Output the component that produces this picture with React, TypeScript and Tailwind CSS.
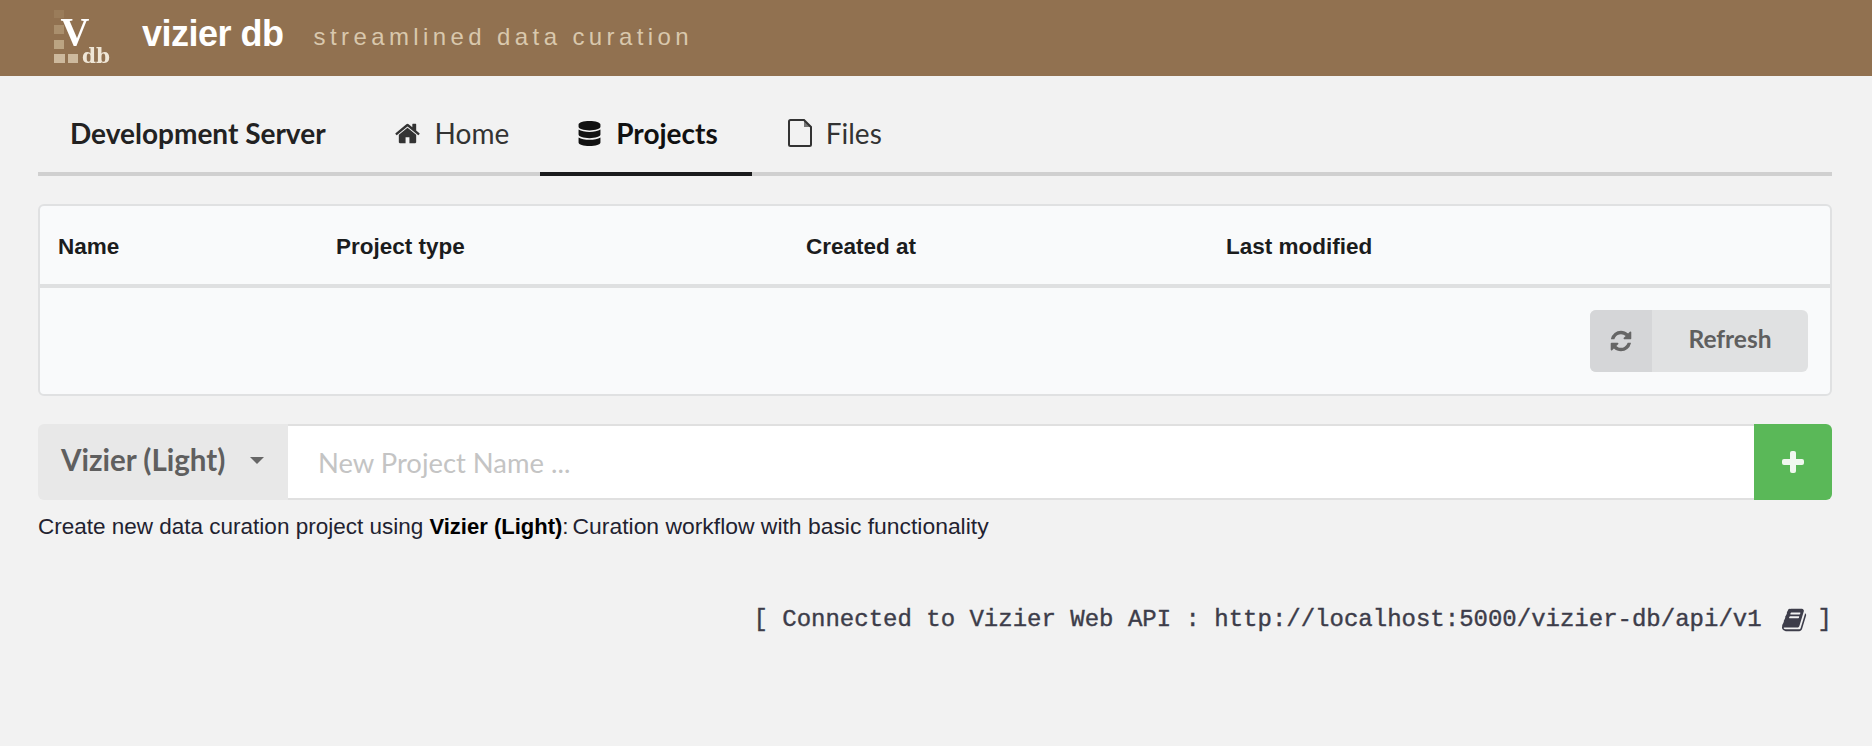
import { FaDatabase } from "react-icons/fa";

function HomeIcon() {
  return (
    <svg viewBox="0 0 1792 1792" className="h-[27px] w-[27px] fill-[#333333]">
      <path d="M1472 992v480q0 26-19 45t-45 19h-384v-384h-256v384h-384q-26 0-45-19t-19-45v-480q0-1 .5-3t.5-3l575-474 575 474q1 2 1 6zm223-69l-62 74q-8 9-21 11h-3q-13 0-21-7l-692-577-692 577q-12 8-24 7-13-2-21-11l-62-74q-8-10-7-23.5t11-21.5l719-599q32-26 76-26t76 26l244 204v-195q0-14 9-23t23-9h192q14 0 23 9t9 23v408l219 182q10 8 11 21.5t-7 23.5z" />
    </svg>
  );
}

function RefreshIcon() {
  return (
    <svg viewBox="0 0 1792 1792" className="h-[24px] w-[24px] fill-[#666666]">
      <path d="M1639 1056q0 5-1 7-64 268-268 434.5t-478 166.5q-146 0-282.5-55t-243.5-157l-129 129q-19 19-45 19t-45-19-19-45v-448q0-26 19-45t45-19h448q26 0 45 19t19 45-19 45l-137 137q71 66 161 102t187 36q134 0 250-65t186-179q11-17 53-117 8-23 30-23h192q13 0 22.5 9.5t9.5 22.5zm25-800v448q0 26-19 45t-45 19h-448q-26 0-45-19t-19-45 19-45l138-138q-148-137-349-137-134 0-250 65t-186 179q-11 17-53 117-8 23-30 23h-199q-13 0-22.5-9.5t-9.5-22.5v-7q65-268 270-434.5t480-166.5q146 0 284 55.5t245 156.5l130-129q19-19 45-19t45 19 19 45z" />
    </svg>
  );
}

function BookIcon() {
  return (
    <svg viewBox="0 0 1792 1792" className="h-[26px] w-[26px] fill-[#3d3d4a]">
      <path d="M1639 478q40 57 18 129l-275 906q-19 64-76.5 107.5t-122.5 43.5h-923q-77 0-148.5-53.5t-99.5-131.5q-24-67-2-127 0-4 3-27t4-37q1-8-3-21.5t-3-19.5q2-11 8-21t16.5-23.5 16.5-23.5q23-38 45-91.5t30-91.5q3-10 .5-30t-.5-28q3-11 17-28t17-23q21-36 42-92t25-90q1-9-2.5-32t.5-28q4-13 22-30.5t22-22.5q19-26 42.5-84.5t27.5-96.5q1-8-3-25.5t-2-26.5q2-8 9-18t18-23 17-21q8-12 16.5-30.5t15-35 16-36 19.5-32 26.5-23.5 36-11.5 47.5 5.5l-1 3q38-9 51-9h761q74 0 114 56t18 130l-274 906q-36 119-71.5 153.5t-128.5 34.5h-869q-27 0-38 15-11 16-1 43 24 70 144 70h923q29 0 56-15.5t35-41.5l300-987q7-22 5-57 38 15 59 43zm-1064 2q-4 13 2 22.5t20 9.5h608q13 0 25.5-9.5t16.5-22.5l21-64q4-13-2-22.5t-20-9.5h-608q-13 0-25.5 9.5t-16.5 22.5zm-83 256q-4 13 2 22.5t20 9.5h608q13 0 25.5-9.5t16.5-22.5l21-64q4-13-2-22.5t-20-9.5h-608q-13 0-25.5 9.5t-16.5 22.5z" />
    </svg>
  );
}

// outlined page with a clipped corner
function FileIcon() {
  return (
    <svg viewBox="0 0 24 28" className="h-[28px] w-[24px]">
      <path d="M16 1l7 7h-7z" fill="#777777" />
      <path d="M2.5 1h13.5l7 7v17.5a1.5 1.5 0 0 1-1.5 1.5h-19a1.5 1.5 0 0 1-1.5-1.5v-23a1.5 1.5 0 0 1 1.5-1.5z" fill="none" stroke="#333333" strokeWidth="2" />
    </svg>
  );
}

function Logo() {
  return (
    <svg viewBox="0 0 58 60" className="h-[60px] w-[58px] flex-none overflow-visible blur-[0.7px]">
      <rect x="0" y="0" width="10" height="8" fill="#9a7c5a" />
      <rect x="0" y="15" width="10" height="9" fill="#aa8f6d" />
      <rect x="0" y="30" width="10" height="9" fill="#bba482" />
      <rect x="0" y="44" width="11" height="9" fill="#cdb99d" />
      <rect x="14" y="44" width="10" height="9" fill="#cdb99d" />
      <text x="21" y="35" textAnchor="middle" fontFamily="'Liberation Serif', serif" fontWeight="700" fontSize="40" fill="#ffffff">V</text>
      <text x="28" y="53" fontFamily="'DejaVu Serif', serif" fontWeight="700" fontSize="20" fill="#efe6d6">db</text>
    </svg>
  );
}

function Tab({ children, active }: { children: React.ReactNode; active?: boolean }) {
  return (
    <div
      className={
        active
          ? "-mb-1 flex h-[100px] items-center gap-[14px] border-b-4 border-[#1b1c1d] pl-[37px] pr-[34px] pt-[18px] font-bold text-[#111111]"
          : "-mb-1 flex h-[100px] items-center gap-[14px] border-b-4 border-transparent pl-9 pr-[31px] pt-[18px] text-[#333333]"
      }
    >
      {children}
    </div>
  );
}

export default function App() {
  return (
    <div className="min-h-screen bg-[#f2f2f2] font-['Lato',sans-serif]">
      <div className="flex h-[76px] items-start bg-[#917150] pl-[54px]">
        <div className="pt-[10px]">
          <Logo />
        </div>
        <span className="ml-[30px] mt-[14px] font-['Liberation_Sans',sans-serif] text-[36px] leading-[40px] font-bold tracking-[-0.5px] text-white">
          vizier db
        </span>
        <span className="ml-[30px] mt-[22px] font-['Liberation_Sans',sans-serif] text-[24px] leading-[30px] tracking-[4.4px] text-[#d9c8ad]">
          streamlined data curation
        </span>
      </div>

      <div className="pl-[38px] pr-[40px]">
        <div className="flex h-[100px] items-stretch border-b-4 border-[#d0d0d0] text-[28px]">
          <div className="-mb-1 flex items-center border-b-4 border-transparent pl-8 pr-[32px] pt-[18px] font-bold text-[#222222]">
            Development Server
          </div>
          <Tab>
            <HomeIcon />
            <span>Home</span>
          </Tab>
          <Tab active>
            <FaDatabase className="h-[25px] w-[25px] text-[#111111]" />
            <span>Projects</span>
          </Tab>
          <Tab>
            <FileIcon />
            <span>Files</span>
          </Tab>
        </div>

        <div className="mt-7 h-[192px] rounded-[6px] border-2 border-[#e0e1e2] bg-[#f9fafb]">
          <div className="flex h-[82px] items-center border-b-4 border-[#dfe0e1] pt-[3px] font-['Liberation_Sans',sans-serif] text-[22.5px] font-bold text-[#1b1c1d]">
            <div className="w-[296px] pl-[18px]">Name</div>
            <div className="w-[470px]">Project type</div>
            <div className="w-[420px]">Created at</div>
            <div>Last modified</div>
          </div>
          <div className="flex justify-end pr-[22px] pt-[22px]">
            <div className="flex h-[62px] w-[218px] overflow-hidden rounded-[6px] bg-[#e0e1e2]">
              <div className="flex w-[62px] flex-none items-center justify-center bg-[#d5d6d8]">
                <RefreshIcon />
              </div>
              <div className="flex flex-1 items-center justify-center pb-[3px] text-[24.5px] font-bold text-[#5f5f5f]">
                Refresh
              </div>
            </div>
          </div>
        </div>

        <div className="mt-7 flex h-[76px]">
          <div className="flex w-[250px] flex-none items-center rounded-l-[6px] bg-[#e8e8e8] pb-[4px] pl-[23px] text-[29.5px] font-bold text-[#5f5f5f]">
            <span>Vizier (Light)</span>
            <span className="ml-[25px] h-0 w-0 border-x-[7px] border-t-[7px] border-x-transparent border-t-[#666666]" />
          </div>
          <div className="flex flex-1 items-center border-y-2 border-[#e0e0e0] bg-white pl-[30px] pt-[2px] text-[27.4px] text-[#c4c4c4]">
            New Project Name ...
          </div>
          <div className="flex w-[78px] flex-none items-center justify-center rounded-r-[6px] bg-[#5ab858]">
            <span className="relative h-[22px] w-[22px]">
              <span className="absolute left-[8px] top-0 h-[22px] w-[6px] rounded-[2px] bg-[#f0f8ef]" />
              <span className="absolute left-0 top-[8px] h-[6px] w-[22px] rounded-[2px] bg-[#f0f8ef]" />
            </span>
          </div>
        </div>

        <p className="mt-[13px] font-['Liberation_Sans',sans-serif] text-[22.5px] leading-[26px] text-[#222230]">
          Create new data curation project using <b className="text-[22px] text-black">Vizier (Light)</b>:<span className="ml-[4px] text-[22.9px]">Curation workflow with basic functionality</span>
        </p>

        <div className="mt-[66px] flex items-center justify-end font-['Liberation_Mono',monospace] text-[24px] leading-[28px] text-[#3d3d4a] [-webkit-text-stroke:0.4px_#3d3d4a]">
          <span>[ Connected to Vizier Web API : http://localhost:5000/vizier-db/api/v1</span>
          <span className="ml-[20px] mr-[10px]">
            <BookIcon />
          </span>
          <span>]</span>
        </div>
      </div>
    </div>
  );
}
